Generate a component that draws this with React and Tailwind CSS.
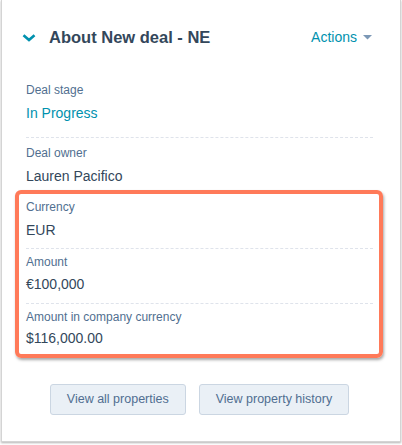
import React from 'react';

const FONT = { fontFamily: '"Liberation Sans", Arial, sans-serif' };

function Property({ label, value, teal, valueGap = 'mt-[5px]' }) {
  return (
    <div>
      <div className="text-[12px] leading-[16px] text-[#516f90]">{label}</div>
      <div className={`${valueGap} text-[14px] leading-[20px] ${teal ? 'text-[#0091ae]' : 'text-[#33475b]'}`}>
        {value}
      </div>
    </div>
  );
}

function Chevron() {
  return (
    <svg width="14" height="9" viewBox="0 0 14 9" className="shrink-0">
      <polyline points="1.5,2.2 7,7 12.5,2.2" fill="none" stroke="#0091ae" strokeWidth="2.6" />
    </svg>
  );
}

export default function App() {
  return (
    <div className="w-[402px] h-[445px] bg-white" style={FONT}>
      <div className="ml-[1px] w-[400px] border-x border-b border-[#d4d4d4] bg-white shadow-[0_1px_2px_rgba(0,0,0,0.3)] pt-[25px] pb-[26px]">
        {/* header */}
        <div className="flex items-center justify-between pl-[20px] pr-[28px] h-[24px]">
          <div className="flex items-center gap-[13px]">
            <Chevron />
            <span className="text-[16.5px] leading-[24px] font-bold text-[#33475b]">About New deal - NE</span>
          </div>
          <div className="flex items-center gap-[6px]">
            <span className="text-[14px] leading-[24px] text-[#0091ae]">Actions</span>
            <svg width="9" height="5" viewBox="0 0 9 5">
              <polygon points="0,0 9,0 4.5,4.5" fill="#7c98b6" />
            </svg>
          </div>
        </div>

        <div className="pl-[24px] pr-[27px]">
          <div className="mt-[33px] pb-[14px] border-b border-dashed border-[#dfe3eb]">
            <Property label="Deal stage" value="In Progress" teal />
          </div>
          <div className="pt-[7px]">
            <Property label="Deal owner" value="Lauren Pacifico" />
          </div>

          {/* highlighted group */}
          <div className="mt-[4px] ml-[-11px] mr-[-10px] border-4 border-[#ff7a59] rounded-[6px] pl-[7px] pr-[6px] pt-[5px] pb-[6px] shadow-[1px_2px_3px_rgba(0,0,0,0.35)]">
            <div className="pb-[8px] border-b border-dashed border-[#dfe3eb]">
              <Property label="Currency" value="EUR" />
            </div>
            <div className="pt-[5px] pb-[9px] border-b border-dashed border-[#dfe3eb]">
              <Property label="Amount" value="€100,000" valueGap="mt-[4px]" />
            </div>
            <div className="pt-[5px]">
              <Property label="Amount in company currency" value="$116,000.00" valueGap="mt-[3px]" />
            </div>
          </div>

          <div className="mt-[26px] flex justify-center gap-[13px]">
            <button className="h-[31px] px-4 rounded-[3px] border border-[#cbd6e2] bg-[#eaf0f6] text-[12.5px] text-[#506e91]">
              View all properties
            </button>
            <button className="h-[31px] px-4 rounded-[3px] border border-[#cbd6e2] bg-[#eaf0f6] text-[12.5px] text-[#506e91]">
              View property history
            </button>
          </div>
        </div>
      </div>
    </div>
  );
}
